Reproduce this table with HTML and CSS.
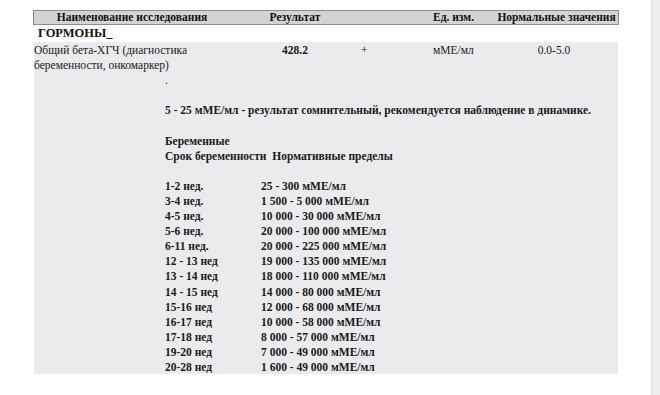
FILE: index.html
```html
<!DOCTYPE html>
<html lang="ru">
<head>
<meta charset="utf-8">
<title>Результаты анализа</title>
<link rel="stylesheet" href="styles.css">
</head>
<body>
<div class="page">
  <main class="doc">
    <div class="thead cols">
      <div class="c-name">Наименование исследования</div>
      <div class="c-res">Результат</div>
      <div class="c-flag"></div>
      <div class="c-unit">Ед. изм.</div>
      <div class="c-norm">Нормальные значения</div>
    </div>
    <div class="section">ГОРМОНЫ_</div>
    <div class="result">
      <div class="cols row">
        <div class="c-name">Общий бета-ХГЧ (диагностика беременности, онкомаркер)</div>
        <div class="c-res bold">428.2</div>
        <div class="c-flag">+</div>
        <div class="c-unit">мМЕ/мл</div>
        <div class="c-norm">0.0-5.0</div>
      </div>
      <div class="comment">
        <p>.</p>
        <p class="gap">5 - 25 мМЕ/мл - результат сомнительный, рекомендуется наблюдение в динамике.</p>
        <p class="gap">Беременные</p>
        <p>Срок беременности&nbsp; Нормативные пределы</p>
        <div class="weeks gap">
          <span>1-2 нед.</span><span>25 - 300 мМЕ/мл</span>
          <span>3-4 нед.</span><span>1 500 - 5 000 мМЕ/мл</span>
          <span>4-5 нед.</span><span>10 000 - 30 000 мМЕ/мл</span>
          <span>5-6 нед.</span><span>20 000 - 100 000 мМЕ/мл</span>
          <span>6-11 нед.</span><span>20 000 - 225 000 мМЕ/мл</span>
          <span>12 - 13 нед</span><span>19 000 - 135 000 мМЕ/мл</span>
          <span>13 - 14 нед</span><span>18 000 - 110 000 мМЕ/мл</span>
          <span>14 - 15 нед</span><span>14 000 - 80 000 мМЕ/мл</span>
          <span>15-16 нед</span><span>12 000 - 68 000 мМЕ/мл</span>
          <span>16-17 нед</span><span>10 000 - 58 000 мМЕ/мл</span>
          <span>17-18 нед</span><span>8 000 - 57 000 мМЕ/мл</span>
          <span>19-20 нед</span><span>7 000 - 49 000 мМЕ/мл</span>
          <span>20-28 нед</span><span>1 600 - 49 000 мМЕ/мл</span>
        </div>
      </div>
    </div>
  </main>
  <div class="scrollbar"></div>
</div>
</body>
</html>
```
FILE: styles.css
```css
html, body {
  margin: 0;
  padding: 0;
  background: #ffffff;
}
body {
  font-family: "Liberation Serif", "Times New Roman", serif;
  font-size: 11.5px;
  color: #1a1a1a;
}
.page {
  display: flex;
  width: 660px;
  height: 395px;
  overflow: hidden;
}
.doc {
  width: 586px;
  padding: 10px 0 0 33px;
  flex: none;
}
.cols {
  display: grid;
  grid-template-columns: 196px 130px 66px 67px 127px;
}
.thead {
  background: #d3d3d3;
  border: 1px solid #8c8c8c;
  font-weight: bold;
  line-height: 13px;
  height: 13px;
  color: #111;
}
.thead > div,
.row > div {
  white-space: nowrap;
}
.c-name { text-align: center; }
.c-res { text-align: center; }
.c-flag { padding-left: 1px; }
.c-unit { padding-left: 7px; }
.c-norm { text-align: center; }
.row .c-norm { padding-right: 5px; }
.section {
  font-weight: bold;
  font-size: 12.5px;
  line-height: 17px;
  height: 17px;
  padding-left: 5px;
  color: #111;
}
.result {
  background: #ebebed;
  margin: 0 1px;
  line-height: 15.1px;
  padding-top: 1px;
  height: 331px;
}
.row .c-name {
  white-space: normal;
  text-align: left;
  width: 180px;
}
.bold { font-weight: bold; }
.comment {
  padding-left: 131px;
  font-weight: bold;
  color: #1a1a1a;
}
.comment p {
  margin: 0;
}
.comment p:first-child {
  font-weight: normal;
}
.gap {
  margin-top: 15.1px !important;
}
.weeks {
  display: grid;
  grid-template-columns: 96px auto;
}
.scrollbar {
  flex: none;
  margin-left: 32px;
  width: 9px;
  height: 395px;
  background: #eeeef0;
  border-left: 1px solid #dcdcdf;
}
```
